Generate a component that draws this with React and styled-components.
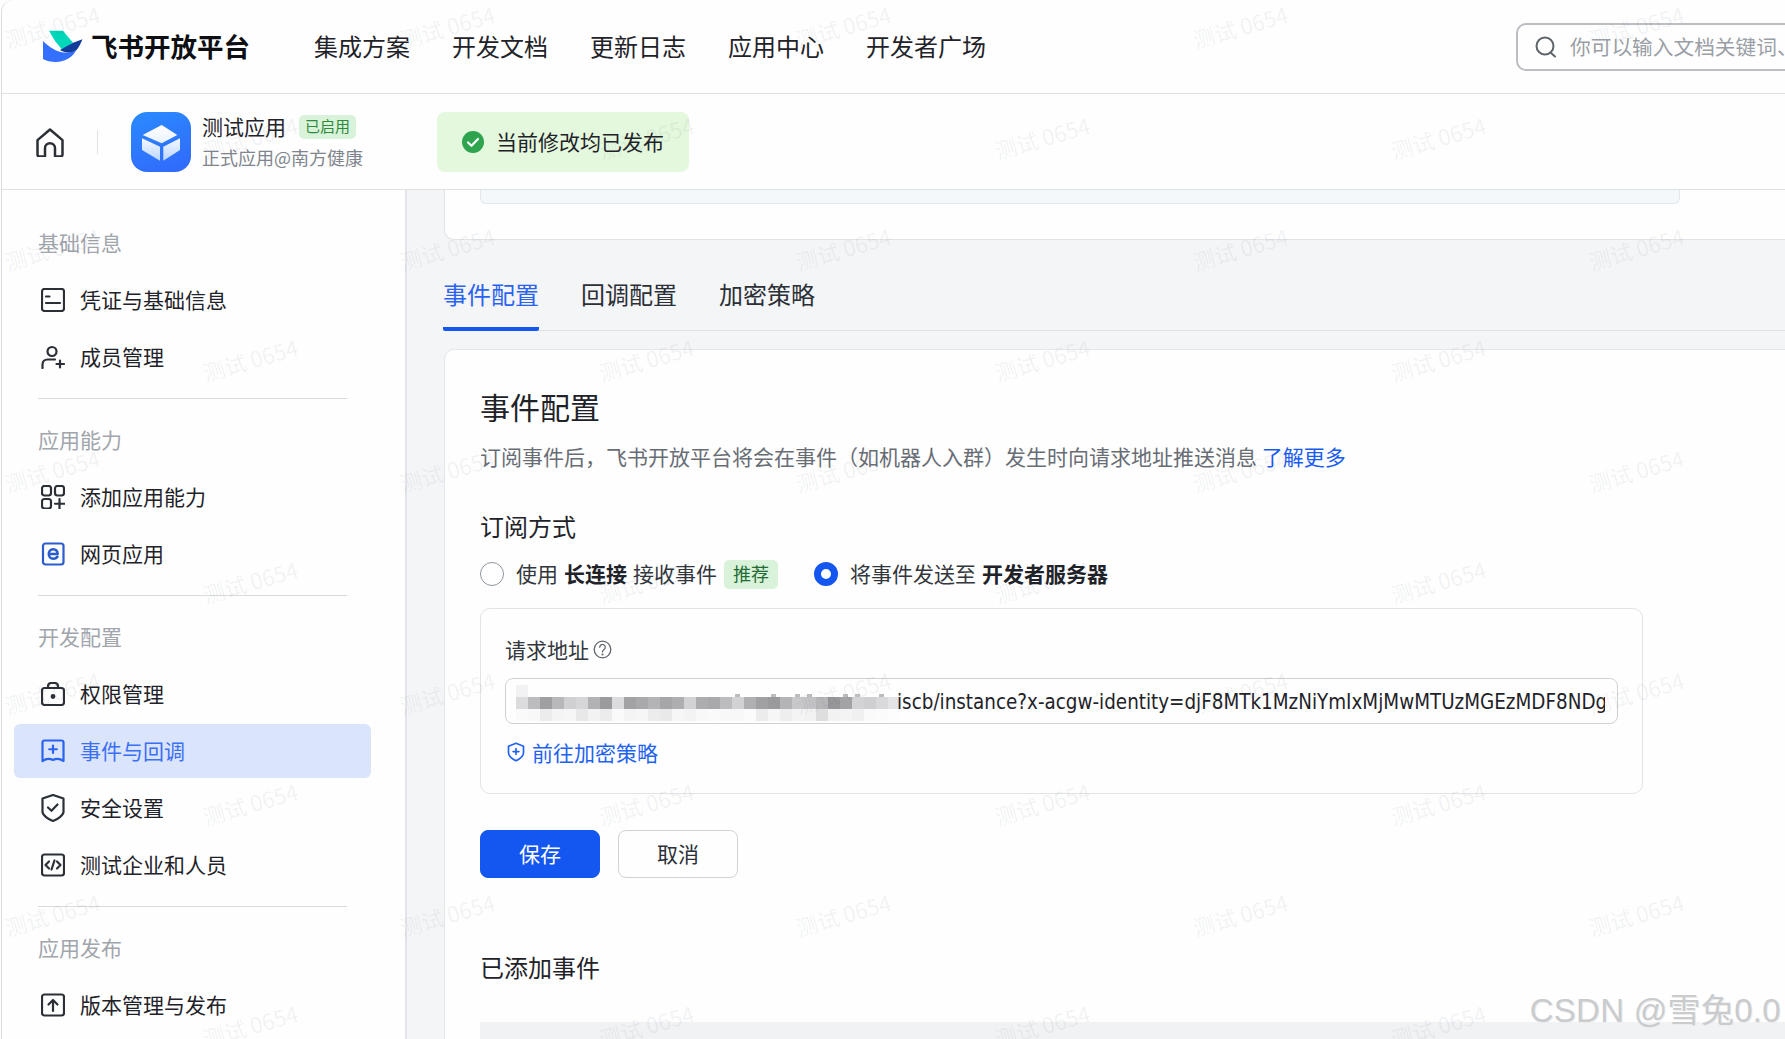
import React from 'react';
import styled, { createGlobalStyle } from 'styled-components';

const Global = createGlobalStyle`
  html, body { margin: 0; padding: 0; background: #fefefe; }
  * { box-sizing: border-box; }
  body { font-family: "Noto Sans CJK SC", "Noto Sans", sans-serif; color: #1f2329; }
`;

const Shell = styled.div`
  position: relative;
  margin-left: 1px;
  width: 1784px;
  height: 1039px;
  border-left: 1px solid #dcdcdc;
  border-top-left-radius: 12px;
  background: #fefefe;
  overflow: hidden;
  display: flex;
  flex-direction: column;
`;

const TopBar = styled.header`
  flex: none;
  height: 94px;
  border-bottom: 1px solid #e0e1e3;
  display: flex;
  align-items: center;
`;
const Brand = styled.div`
  flex: none;
  width: 312px;
  padding-left: 41px;
  display: flex;
  align-items: center;
  gap: 8px;
`;
const BrandName = styled.span`
  font-size: 26.500px;
  font-weight: 700;
  color: #0d0f12;
  line-height: 32px;
  margin-bottom: 2px;
`;
const TopNav = styled.nav`
  flex: none;
  display: flex;
  gap: 42px;
`;
const TopLink = styled.a`
  font-size: 24px;
  line-height: 34px;
  color: #1f2329;
  margin-bottom: 2px;
`;
const SearchBox = styled.div`
  flex: none;
  margin-left: 530px;
  width: 420px;
  height: 48px;
  border: 2px solid #babdc2;
  border-radius: 10px;
  display: flex;
  align-items: center;
  padding-left: 16px;
  gap: 12px;
  font-size: 20.7px;
  color: #9a9ea6;
  white-space: nowrap;
`;
const SearchHint = styled.span`
  margin-bottom: 2px;
`;

const AppBar = styled.div`
  flex: none;
  height: 96px;
  border-bottom: 1px solid #e0e1e3;
  display: flex;
  align-items: center;
`;
const HomeSlot = styled.div`
  flex: none;
  width: 96px;
  height: 24px;
  margin-right: 33px;
  padding-left: 33px;
  border-right: 1px solid #e1e2e4;
  display: flex;
  align-items: center;
`;
const AppIcon = styled.div`
  flex: none;
  width: 60px;
  height: 60px;
  border-radius: 16px;
  background: linear-gradient(160deg, #2a8bff, #3168fb);
  margin-right: 11px;
`;
const AppMeta = styled.div`
  flex: none;
  width: 235px;
  display: flex;
  flex-direction: column;
  gap: 1px;
`;
const AppTitleRow = styled.div`
  display: flex;
  align-items: center;
  gap: 13px;
  height: 30px;
`;
const AppTitle = styled.span`
  font-size: 21px;
  color: #1f2329;
  margin-bottom: 2px;
`;
const EnabledTag = styled.span`
  width: 57px;
  height: 24px;
  border-radius: 5px;
  background: #d9f3db;
  color: #2f8a3b;
  font-size: 15px;
  line-height: 22px;
  text-align: center;
`;
const AppSub = styled.span`
  font-size: 18px;
  line-height: 28px;
  color: #80858d;
  white-space: nowrap;
`;
const PublishedBanner = styled.div`
  flex: none;
  width: 252px;
  height: 60px;
  border-radius: 8px;
  background: #e3f8dd;
  display: flex;
  align-items: center;
  padding: 0 0 2px 24px;
  gap: 11px;
  font-size: 21px;
  color: #1f2329;
`;
const CheckIcon = styled.svg`
  flex: none;
  margin-top: 2px;
`;

const Body = styled.div`
  flex: 1;
  min-height: 0;
  display: flex;
`;
const Sidebar = styled.aside`
  flex: none;
  width: 405px;
  border-right: 2px solid #e4e5e8;
  padding: 39px 0 0 0;
  background: #fefefe;
`;
const SideLabel = styled.div`
  margin: ${p => (p.$first ? '0' : '27px')} 0 18px 36px;
  font-size: 21px;
  line-height: 26px;
  color: #a1a5ac;
`;
const SideItem = styled.a`
  display: flex;
  align-items: center;
  gap: 15px;
  height: 54px;
  margin: 0 34px 3px 12px;
  padding-left: 27px;
  border-radius: 6px;
  font-size: 21px;
  color: ${p => (p.$active ? '#3b6ff5' : '#1f2329')};
  background: ${p => (p.$active ? '#dae4fb' : 'transparent')};
`;
const ItemText = styled.span`
  margin-bottom: 2px;
`;
const SideRule = styled.div`
  height: 1.5px;
  margin: 13.5px 58px 0 36px;
  background: #dadada;
`;

const Main = styled.main`
  flex: 1;
  min-width: 0;
  background: #f4f5f7;
  padding-left: 37px;
  overflow: hidden;
`;
const Column = styled.div`
  width: 1500px;
`;
const StubCard = styled.div`
  height: 50px;
  background: #fefefe;
  border: 1px solid #e1e3e6;
  border-top: none;
  border-bottom-left-radius: 10px;
`;
const StubInner = styled.div`
  width: 1200px;
  height: 14px;
  margin-left: 35px;
  background: #f4f8fb;
  border: 1px solid #e2e6ea;
  border-top: none;
  border-radius: 0 0 6px 6px;
`;
const Tabs = styled.div`
  margin-top: 20px;
  padding-left: 0;
  display: flex;
  gap: 42px;
  border-bottom: 1px solid #dfe1e4;
`;
const Tab = styled.a`
  height: 71px;
  margin: 0 0 -1px ${p => (p.$active ? '-1px' : '0')};
  padding-top: 17px;
  font-size: 24px;
  line-height: 34px;
  color: ${p => (p.$active ? '#2a63f0' : '#2b2f36')};
  border-bottom: 4px solid ${p => (p.$active ? '#1456f0' : 'transparent')};
  border-radius: 0 0 2px 2px;
`;
const Card = styled.section`
  margin-top: 18px;
  height: 720px;
  padding: 39px 0 0 35px;
  background: #fefefe;
  border: 1px solid #e5e6e8;
  border-radius: 10px 0 0 0;
`;
const CardTitle = styled.h2`
  margin: 0;
  font-size: 30px;
  font-weight: 400;
  line-height: 34px;
  color: #1f2329;
`;
const Desc = styled.p`
  margin: 18px 0 0;
  font-size: 21px;
  line-height: 30px;
  color: #686d75;
  white-space: nowrap;
`;
const Link = styled.a`
  color: #1a5cf0;
`;
const SubTitle = styled.h3`
  margin: ${p => p.$mt}px 0 0;
  font-size: 24px;
  font-weight: 400;
  line-height: 34px;
  color: #1f2329;
`;
const RadioRow = styled.div`
  margin-top: 16px;
  height: 30px;
  padding-bottom: 2px;
  display: flex;
  align-items: center;
  font-size: 21px;
  color: #33373d;
`;
const Radio = styled.span`
  flex: none;
  width: 24px;
  height: 24px;
  border-radius: 50%;
  margin: ${p => (p.$checked ? '2px 12px 0 36px' : '2px 12px 0 0')};
  background: #fff;
  border: ${p => (p.$checked ? '7px solid #1456f0' : '1px solid #8f959e')};
`;
const Strong = styled.b`
  font-weight: 700;
  margin: 0 6px;
  color: #1f2329;
`;
const Recommend = styled.span`
  width: 54px;
  height: 29px;
  margin: 2px 0 0 7px;
  border-radius: 5px;
  background: #d9f3db;
  color: #246b33;
  font-size: 18px;
  line-height: 27px;
  text-align: center;
`;
const EndpointBox = styled.div`
  margin-top: 19px;
  width: 1163px;
  height: 186px;
  padding: 27px 24px 0;
  border: 1px solid #e2e3e6;
  border-radius: 10px;
`;
const FieldLabel = styled.div`
  display: flex;
  align-items: center;
  gap: 4px;
  height: 26px;
  font-size: 21px;
  line-height: 26px;
  color: #33373d;
`;
const UrlInput = styled.div`
  margin-top: 16px;
  height: 46px;
  padding: 0 12px 0 10px;
  border: 1px solid #cfd1d5;
  border-radius: 8px;
  display: flex;
  align-items: center;
  overflow: hidden;
  white-space: nowrap;
  font-family: "DejaVu Sans Condensed", "DejaVu Sans", sans-serif;
  font-size: 20.4px;
  color: #1f2329;
`;
const UrlText = styled.span`
  display: block;
  flex: 1;
  min-width: 0;
  overflow: hidden;
  margin: 2px 0 0 -3px;
`;
const PolicyLink = styled.a`
  margin-top: 13px;
  display: flex;
  align-items: center;
  gap: 6px;
  padding-left: 1px;
  font-size: 21px;
  line-height: 30px;
  color: #1f62f0;
`;
const Actions = styled.div`
  margin-top: 36px;
  display: flex;
  gap: 18px;
`;
const Button = styled.button`
  width: 120px;
  height: 48px;
  border-radius: 8px;
  font-family: inherit;
  font-size: 21px;
  padding: 0 0 2px;
  color: ${p => (p.$primary ? '#fff' : '#2b2f36')};
  background: ${p => (p.$primary ? '#1456f0' : '#fefefe')};
  border: 1px solid ${p => (p.$primary ? '#1456f0' : '#d0d3d6')};
`;
const TableHead = styled.div`
  margin-top: 38px;
  height: 60px;
  background: #f1f2f4;
`;

const Marks = styled.div`
  position: absolute;
  inset: 0;
  pointer-events: none;
`;
const Mark = styled.span`
  position: absolute;
  width: 110px;
  margin: -14px 0 0 -55px;
  font-size: 22px;
  line-height: 28px;
  text-align: center;
  white-space: nowrap;
  color: rgba(60, 70, 90, 0.07);
  transform: rotate(-16deg);
`;
const Credit = styled.div`
  position: absolute;
  right: 4px;
  top: 989px;
  font-family: "Liberation Sans", "Noto Sans CJK SC", sans-serif;
  font-size: 33px;
  line-height: 44px;
  letter-spacing: 0.3px;
  white-space: nowrap;
  color: #c9cbcd;
  text-shadow: 1px 1px 0 #ececec;
`;

const Ico = styled.svg`
  flex: none;
  display: block;
  fill: none;
  stroke: ${p => p.$c || '#2b2f36'};
  stroke-width: ${p => p.$w || 2.200};
  stroke-linecap: round;
  stroke-linejoin: round;
`;

const I = ({ c, size = 24, h, w, children }) => (
  <Ico $c={c} $w={w} width={size} height={h || size} viewBox={`0 0 24 ${h || 24}`}>{children}</Ico>
);

const icons = {
  card: <><rect x="1" y="1" width="22" height="22" rx="2.500" /><path d="M5 8.500h3.500M5 15h14" /></>,
  user: <><circle cx="11" cy="6.500" r="4.500" /><path d="M1.500 23v-3.500c0-3 2.200-5 5-5H14" /><path d="M19 15.500v7M15.500 19h7.500" /></>,
  apps: <><rect x="1" y="1" width="9" height="9.500" rx="2.500" /><rect x="14" y="1" width="9" height="9.500" rx="2.500" /><rect x="1" y="14" width="9" height="9.500" rx="2.500" /><path d="M18.500 14v9.500M14 18.750h9.500" /></>,
  web: <><rect x="2" y="1.500" width="20.500" height="21" rx="2.500" /><path d="M7.800 12h8.800c0-3-1.800-4.800-4.400-4.800S7.800 9.200 7.800 12s1.800 4.800 4.400 4.800c1.800 0 3.200-.6 4.200-1.900" strokeWidth="2.600" /></>,
  lock: <><rect x="1" y="6" width="22" height="17" rx="2.500" /><path d="M7 6V4.500C7 2.500 8.500 1 10.500 1h3C15.500 1 17 2.500 17 4.500V6" /><circle cx="12" cy="14.500" r="1.300" fill="#2b2f36" /></>,
  event: <><path d="M3.500 1.500h17c1.100 0 2 .9 2 2v18.500c-3.500-2.500-7-3-10.500-1-3.500-2-7-1.500-10.500 1V3.500c0-1.100.9-2 2-2z" /><path d="M12 6.500v7.500M8.250 10.250h7.500" /></>,
  shield: <><path d="M12 1l10.500 3.500V18c0 3-6 7.500-10.500 9C7.500 25.500 1.500 21 1.500 18V4.500z" /><path d="M7 13.500l3.500 3.300L16.500 10.500" /></>,
  code: <><rect x="1" y="1.500" width="22" height="21" rx="2.500" /><path d="M8 8.500L4.500 12 8 15.500M16 8.500l3.500 3.500-3.500 3.500M13.500 7.500l-3 9" /></>,
  up: <><rect x="1" y="1.500" width="22" height="21" rx="2.500" /><path d="M12 18V7M7.500 11.500L12 7l4.500 4.500" /></>,
};

const Logo = () => (
  <svg width="40" height="33" viewBox="0 0 40 33" style={{ flex: 'none' }}>
    <path d="M6 .7h14L30 12.700 19 19.500 12 11z" fill="#00d6b9" />
    <path d="M0 11C6 17 14 22 20 22.500c5 .5 10-.5 14-3.500-4 8-12 13-21 13-5 0-10-1-13-3z" fill="#3370ff" />
    <path d="M39.500 9.300L30 12.700 17 20c4 2.500 11 4 17-.5 2.500-3 4-7 5.500-10.200z" fill="#133c9a" />
  </svg>
);

const Cube = () => (
  <svg width="60" height="60" viewBox="0 0 60 60" style={{ display: 'block' }}>
    <defs>
      <linearGradient id="cubeTop" x1="0" y1="0" x2="0" y2="1">
        <stop offset="0" stopColor="#ffffff" />
        <stop offset="1" stopColor="#eaf2ff" />
      </linearGradient>
      <linearGradient id="cubeSide" x1="0" y1="0" x2="0" y2="1">
        <stop offset="0" stopColor="#f4f8ff" />
        <stop offset="1" stopColor="#bcd6ff" />
      </linearGradient>
    </defs>
    <path d="M30.700 13l15.600 10-15.600 8.300L11.700 23z" fill="url(#cubeTop)" />
    <path d="M11 26.300l18 8.400v14L11 38z" fill="url(#cubeSide)" />
    <path d="M32.300 34.700L49 26.300V38L32.300 48.700z" fill="url(#cubeSide)" />
  </svg>
);

const core = ['#dcdcde', '#bcbcbf', '#9f9fa2', '#b8b8bb', '#d0d0d3', '#d6d6d8', '#b2b2b5', '#9b9b9e', '#dcdcde', '#a2a2a5', '#a9a9ac', '#b4b4b7', '#a6a6a9', '#aeaeb1', '#d2d2d5', '#adadb0', '#a9a9ac', '#bcbcbf', '#d2d2d4', '#b0b0b3', '#a0a0a3', '#9a9a9d', '#b4b4b7', '#c8c8cb', '#c4c4c7', '#b6b6b9', '#979799', '#a3a3a6', '#d3d3d6', '#cfcfd2', '#d9d9db', '#e4e4e6'];
const low = ['#fafafa', '#f8f8f8', '#ececec', '#f4f4f4', '#f6f6f6', '#e8e8e8', '#f2f2f2', '#ececec', '#fafafa', '#f4f4f4', '#f6f6f6', '#ececec', '#e9e9e9', '#f6f6f6', '#f3f3f3', '#f8f8f8', '#fafafa', '#f8f8f8', '#f8f8f8', '#fbfbfb', '#ececec', '#f6f6f6', '#eeeeee', '#f4f4f4', '#f2f2f2', '#dedede', '#f2f2f2', '#f4f4f4', '#f0f0f0', '#fafafa', '#fbfbfb', '#fdfdfd'];
const high = [0, 0, 0, 0, 0, 0, 0, 0, 0, 0, 0, 0, 0, 0, 0, 0, 0, 0, 1, 0, 0, 1, 0, 1, 1, 0, 0, 1, 1, 0, 1, 0];

const Mosaic = () => (
  <svg width="384" height="36" viewBox="0 0 384 36" style={{ flex: 'none', marginTop: 4 }}>
    <rect x="0" y="0" width="12" height="12" fill="#f2f2f4" />
    {core.map((c, i) => <rect key={'c' + i} x={i * 12} y="12" width="12" height="12" fill={c} />)}
    {low.map((c, i) => <rect key={'l' + i} x={i * 12} y="24" width="12" height="12" fill={c} />)}
    {high.map((v, i) => v ? <rect key={'h' + i} x={i * 12 + 3} y="9" width="5" height="3" fill="#bdbdc0" /> : null)}
  </svg>
);

const groups = [
  { title: '基础信息', items: [['card', '凭证与基础信息'], ['user', '成员管理']] },
  { title: '应用能力', items: [['apps', '添加应用能力'], ['web', '网页应用', '#2a5ccf']] },
  { title: '开发配置', items: [['lock', '权限管理'], ['event', '事件与回调', '#2a63f0', true], ['shield', '安全设置', undefined, false, 28], ['code', '测试企业和人员']] },
  { title: '应用发布', items: [['up', '版本管理与发布']] },
];

const setA = [52, 447, 843, 1240, 1636];
const setB = [250, 646, 1042, 1438];
const marks = [];
[26, 248, 470, 692, 914].forEach(y => setA.forEach(x => marks.push([x, y])));
[137, 359, 581, 803, 1025].forEach(y => setB.forEach(x => marks.push([x, y])));

export default function App() {
  return (
    <>
      <Global />
      <Shell>
        <TopBar>
          <Brand><Logo /><BrandName>飞书开放平台</BrandName></Brand>
          <TopNav>
            {['集成方案', '开发文档', '更新日志', '应用中心', '开发者广场'].map(t => <TopLink key={t}>{t}</TopLink>)}
          </TopNav>
          <SearchBox>
            <I c="#5f646c" w={2}><circle cx="11" cy="11" r="8.500" /><path d="M17 18l4 3.500" /></I>
            <SearchHint>你可以输入文档关键词、API、错误码</SearchHint>
          </SearchBox>
        </TopBar>
        <AppBar>
          <HomeSlot>
            <I size={30} w={2}><path d="M2 10.500L12 2l10 8.500V22a1.500 1.500 0 0 1-1.500 1.500H16V17a4 4 0 0 0-8 0v6.500H3.500A1.500 1.500 0 0 1 2 22z" /></I>
          </HomeSlot>
          <AppIcon><Cube /></AppIcon>
          <AppMeta>
            <AppTitleRow><AppTitle>测试应用</AppTitle><EnabledTag>已启用</EnabledTag></AppTitleRow>
            <AppSub>正式应用@南方健康</AppSub>
          </AppMeta>
          <PublishedBanner>
            <CheckIcon width="24" height="24" viewBox="0 0 24 24">
              <circle cx="12" cy="12" r="11" fill="#2ea44f" />
              <path d="M7 12.500l3.500 3.300L17 9" fill="none" stroke="#fff" strokeWidth="2.200" strokeLinecap="round" strokeLinejoin="round" />
            </CheckIcon>
            当前修改均已发布
          </PublishedBanner>
        </AppBar>
        <Body>
          <Sidebar>
            {groups.map((g, gi) => (
              <React.Fragment key={g.title}>
                {gi > 0 && <SideRule />}
                <SideLabel $first={gi === 0}>{g.title}</SideLabel>
                {g.items.map(([ic, label, color, active, h]) => (
                  <SideItem key={label} $active={active}>
                    <I c={color} h={h}>{icons[ic]}</I>
                    <ItemText>{label}</ItemText>
                  </SideItem>
                ))}
              </React.Fragment>
            ))}
          </Sidebar>
          <Main>
            <Column>
              <StubCard><StubInner /></StubCard>
              <Tabs>
                <Tab $active>事件配置</Tab>
                <Tab>回调配置</Tab>
                <Tab>加密策略</Tab>
              </Tabs>
              <Card>
                <CardTitle>事件配置</CardTitle>
                <Desc>订阅事件后，飞书开放平台将会在事件（如机器人入群）发生时向请求地址推送消息 <Link>了解更多</Link></Desc>
                <SubTitle $mt={38}>订阅方式</SubTitle>
                <RadioRow>
                  <Radio />使用<Strong>长连接</Strong>接收事件<Recommend>推荐</Recommend>
                  <Radio $checked />将事件发送至<Strong>开发者服务器</Strong>
                </RadioRow>
                <EndpointBox>
                  <FieldLabel>
                    请求地址
                    <I c="#5f646c" size={19} w={1.600}><circle cx="12" cy="12" r="10.500" /><path d="M8.500 9.200a3.500 3.500 0 1 1 5.400 2.900c-1.200.8-1.900 1.500-1.900 2.900" /><circle cx="12" cy="18.300" r=".6" /></I>
                  </FieldLabel>
                  <UrlInput>
                    <Mosaic />
                    <UrlText>iscb/instance?x-acgw-identity=djF8MTk1MzNiYmIxMjMwMTUzMGEzMDF8NDg1ZWM0NjE</UrlText>
                  </UrlInput>
                  <PolicyLink>
                    <I c="#1f62f0" size={20} w={2}><path d="M12 1.500l9 3.500v8c0 4-4.500 7.500-9 9.500-4.500-2-9-5.500-9-9.500V5z" /><path d="M12 8v7M8.500 11.500h7" /></I>
                    前往加密策略
                  </PolicyLink>
                </EndpointBox>
                <Actions>
                  <Button $primary>保存</Button>
                  <Button>取消</Button>
                </Actions>
                <SubTitle $mt={72}>已添加事件</SubTitle>
                <TableHead />
              </Card>
            </Column>
          </Main>
        </Body>
        <Marks>
          {marks.map(([x, y]) => <Mark key={x + '-' + y} style={{ left: x - 2, top: y }}>测试 0654</Mark>)}
        </Marks>
        <Credit>CSDN @雪兔0.0</Credit>
      </Shell>
    </>
  );
}
